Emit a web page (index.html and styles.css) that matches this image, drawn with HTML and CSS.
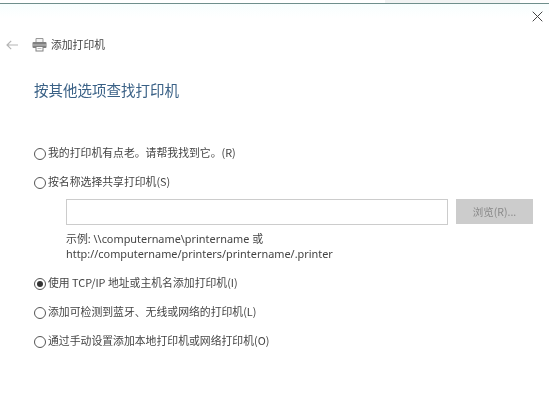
FILE: index.html
```html
<!DOCTYPE html>
<html lang="zh-CN">
<head>
<meta charset="utf-8">
<title>添加打印机</title>
<link rel="stylesheet" href="styles.css">
</head>
<body>
<div class="topline"><div class="topshade"></div></div>
<div class="window">
  <div class="closebar">
    <svg class="close" width="11" height="11" viewBox="0 0 11 11"><path d="M.7.7l9.6 9.6M10.3.7L.7 10.3" fill="none" stroke="#444" stroke-width="1"/></svg>
  </div>
  <div class="nav">
    <svg class="back" width="12" height="10" viewBox="0 0 12 10"><path d="M5.2.8L1 5l4.2 4.2M1 5h11" fill="none" stroke="#b5b5b5" stroke-width="1.2"/></svg>
    <svg class="printer" width="15" height="15" viewBox="0 0 15 15">
      <path d="M4 5V1.5h7V5" fill="#f4f4f4" stroke="#999"/>
      <rect x=".5" y="5" width="14" height="6" rx="1" fill="#808080"/>
      <path d="M1 8h13" stroke="#c4c4c4"/>
      <rect x="4" y="9.5" width="7" height="4.5" fill="#fff" stroke="#808080"/>
      <path d="M5.5 11.5h4" stroke="#bbb"/>
    </svg>
    <span class="navtitle">添加打印机</span>
  </div>
  <h1 class="heading">按其他选项查找打印机</h1>
  <div class="options">
    <label class="opt"><span class="radio"></span>我的打印机有点老。请帮我找到它。(R)</label>
    <label class="opt tight"><span class="radio"></span>按名称选择共享打印机(S)</label>
    <div class="share">
      <div class="inputrow">
        <div class="input"></div>
        <div class="btn">浏览(R)...</div>
      </div>
      <p class="hint">示例: \\computername\printername 或<br>http://computername/printers/printername/.printer</p>
    </div>
    <label class="opt"><span class="radio on"></span>使用 TCP/IP 地址或主机名添加打印机(I)</label>
    <label class="opt"><span class="radio"></span>添加可检测到蓝牙、无线或网络的打印机(L)</label>
    <label class="opt"><span class="radio"></span>通过手动设置添加本地打印机或网络打印机(O)</label>
  </div>
</div>
</body>
</html>
```
FILE: styles.css
```css
* { box-sizing: border-box; }
html, body { margin: 0; padding: 0; }
body {
  width: 549px;
  height: 405px;
  overflow: hidden;
  background: #fff;
  color: #333;
  font-family: "Noto Sans CJK SC", "Liberation Sans", sans-serif;
  font-size: 10.85px;
  filter: blur(0.3px);
}
.topline { height: 4px; border-bottom: 1px solid #6f8f8c; display: flex; justify-content: flex-end; padding-right: 29px; }
.topshade { width: 135px; height: 3px; background: #f1f3f3; }
.window { padding: 0 6px 0 7px; background: linear-gradient(#f8fefe, #fff 14px); }
.closebar { display: flex; justify-content: flex-end; height: 20px; padding-top: 7px; }
.close { display: block; }
.nav { display: flex; align-items: center; height: 15px; margin-top: 13px; }
.back { margin-right: 14px; margin-left: -1px; }
.printer { margin-right: 4px; }
.navtitle { font-size: 10.8px; line-height: 15px; color: #444; }
.heading {
  margin: 28px 0 0 27px;
  font-size: 14.5px;
  line-height: 20px;
  font-weight: 400;
  color: #3a6186;
}
.options { margin: 44px 0 0 27px; display: flex; flex-direction: column; }
.opt { display: flex; align-items: center; height: 16px; line-height: 16px; margin-bottom: 13px; color: #444; white-space: nowrap; }
.opt.tight { margin-bottom: 10px; }
.radio {
  width: 12px; height: 12px; border: 1px solid #555; border-radius: 50%;
  margin-right: 2px; flex: none; display: flex; align-items: center; justify-content: center; position: relative; top: 2px;
}
.radio.on::after { content: ""; width: 6px; height: 6px; border-radius: 50%; background: #333; }
.share { margin: 0 0 0 32px; }
.inputrow { display: flex; gap: 8px; }
.input { width: 382px; height: 26px; border: 1px solid #ccc; background: #fff; }
.btn {
  width: 77px; height: 25px; background: #ccc; color: #8a8a8a;
  display: flex; align-items: center; justify-content: center; font-size: 10.5px;
}
.hint { margin: 6px 0 0; font-size: 10.9px; line-height: 15px; color: #444; font-family: "Noto Sans", "Noto Sans CJK SC", sans-serif; }
.share + .opt { margin-top: 13px; }
```
